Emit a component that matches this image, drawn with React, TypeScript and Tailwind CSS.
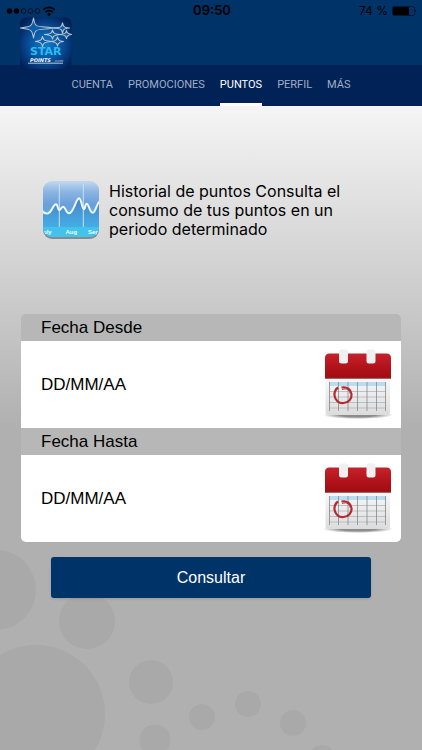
import { useState } from 'react';

const tabs = ['CUENTA', 'PROMOCIONES', 'PUNTOS', 'PERFIL', 'MÁS'];

function StatusBar() {
  return (
    <div className="relative z-10 flex h-[22px] items-center pr-[5px] pl-[7px] font-['Inter',sans-serif] text-xs text-black">
      <div className="flex flex-1 items-center">
        <svg width="48" height="12" viewBox="0 0 48 12" overflow="visible" aria-hidden="true">
          <circle cx="2.500" cy="6" r="2.700" />
          <circle cx="9.500" cy="6" r="2.700" />
          <g fill="none" stroke="#000" strokeWidth="0.700">
            <circle cx="16.500" cy="6" r="2.400" />
            <circle cx="23.500" cy="6" r="2.400" />
            <circle cx="30.500" cy="6" r="2.400" />
          </g>
          <g fill="none" stroke="#000" strokeWidth="1.700">
            <path d="M36.300 4.700a8.200 8.200 0 0 1 11.400 0" />
            <path d="M38.300 7.200a5.200 5.200 0 0 1 7.400 0" />
          </g>
          <path d="M42 11.200l-2-2.200a2.900 2.900 0 0 1 4 0z" />
        </svg>
      </div>
      <span className="text-[13px] font-semibold">09:50</span>
      <div className="flex flex-1 items-center justify-end gap-1">
        <span>74 %</span>
        <svg width="25" height="10" viewBox="0 0 25 10" aria-hidden="true">
          <rect x="0.500" y="0.500" width="22" height="9" rx="1.500" fill="none" stroke="#000" strokeOpacity="0.700" strokeWidth="0.700" />
          <rect x="1" y="1" width="16" height="8" rx="0.800" />
          <path d="M23.400 3.200q1.500 1.800 0 3.600z" />
        </svg>
      </div>
    </div>
  );
}

interface StarProps {
  x: number;
  y: number;
  left: number;
  right: number;
  tall: number;
  waist: number;
}

// four-pointed star with arms that curve in to the waist
function Star({ x, y, left, right, tall, waist }: StarProps) {
  const w = waist;
  return (
    <path
      d={`M${x} ${y - tall}Q${x + w / 2} ${y - w} ${x + w} ${y - w}Q${x + w} ${y - w / 2} ${x + right} ${y}Q${x + w} ${y + w / 2} ${x + w} ${y + w}Q${x + w / 2} ${y + w} ${x} ${y + tall}Q${x - w / 2} ${y + w} ${x - w} ${y + w}Q${x - w} ${y + w / 2} ${x - left} ${y}Q${x - w} ${y - w / 2} ${x - w} ${y - w}Q${x - w / 2} ${y - w} ${x} ${y - tall}z`}
    />
  );
}

function Logo() {
  return (
    <svg
      className="absolute top-[17px] left-5"
      width="52"
      height="52"
      viewBox="0 0 52 52"
      overflow="visible"
      role="img"
      aria-label="Star Points"
    >
      <defs>
        <radialGradient id="logoBg" cx="50%" cy="52%" r="62%">
          <stop offset="0" stopColor="#0d7cc8" />
          <stop offset="0.450" stopColor="#0a57a4" />
          <stop offset="1" stopColor="#021f57" />
        </radialGradient>
      </defs>
      <rect y="0.500" width="51.500" height="51.500" rx="6" fill="url(#logoBg)" />
      <g fill="#0d5ca8" stroke="#b9c5cf" strokeWidth="1.100" strokeLinejoin="round">
        <Star x={13.5} y={11} left={13} right={24} tall={10} waist={2.8} />
        <Star x={42.5} y={11} left={8} right={7} tall={5} waist={1.6} />
        <Star x={32.5} y={17.5} left={8} right={8} tall={4.5} waist={1.6} />
        <Star x={46.5} y={17.5} left={6} right={5} tall={4} waist={1.4} />
        <Star x={22.5} y={24.5} left={7} right={9} tall={5} waist={1.7} />
        <Star x={37.5} y={24.5} left={7} right={6} tall={4.5} waist={1.6} />
      </g>
      <text x="10" y="37.500" fontFamily="DejaVu Sans, sans-serif" fontWeight="700" fontSize="11" fill="#2bbcf3">STAR</text>
      <text x="10" y="45" fontFamily="DejaVu Sans, sans-serif" fontWeight="700" fontStyle="italic" fontSize="5" fill="#f4f8fb">POINTS</text>
      <text x="34" y="45" fontFamily="Liberation Sans, sans-serif" fontWeight="700" fontStyle="italic" fontSize="4" fill="#8fa9c4">.com</text>
      <path d="M8 46.200h35" stroke="#b7c8d9" strokeWidth="1" />
    </svg>
  );
}

function ChartIcon() {
  const wave =
    'M1 31C3 33 5 34 7.300 33.300 11 32 12 24.500 15 24.300 17 24.500 16.500 30 18.300 30 20 30 20.500 26.500 22.300 26.700 24.500 27 25 33.500 28.300 33.300 32.500 33 35 18.500 38 18.300 40.500 18.500 41 29 43 29.300 44.500 29.300 44 23.700 45.700 23.700 48 24 48.500 32.700 51.700 32.700 55 32.500 55 24 59 21';
  return (
    <svg className="shrink-0" width="60" height="60" viewBox="0 0 60 60" aria-hidden="true">
      <defs>
        <linearGradient id="chartBg" x1="0" y1="0" x2="0" y2="1">
          <stop offset="0" stopColor="#c3d8f0" />
          <stop offset="0.200" stopColor="#8ab4e2" />
          <stop offset="0.420" stopColor="#6a9fda" />
          <stop offset="0.700" stopColor="#55b4e8" />
          <stop offset="1" stopColor="#2fb9e9" />
        </linearGradient>
        <linearGradient id="chartArea" x1="0" y1="0" x2="0" y2="1">
          <stop offset="0" stopColor="#3a77c5" />
          <stop offset="1" stopColor="#43bdec" />
        </linearGradient>
        <clipPath id="chartClip">
          <rect x="2" y="1" width="56" height="56" rx="9" />
        </clipPath>
      </defs>
      <rect x="2" y="3" width="56" height="56" rx="9" fill="#858b91" />
      <g clipPath="url(#chartClip)">
        <rect x="1" y="1" width="58" height="56" fill="url(#chartBg)" />
        <path d={`${wave}V58H1z`} fill="url(#chartArea)" opacity="0.700" />
        <path d="M18.300 4v43M42.300 4v43" stroke="#c5e1f5" strokeWidth="1" />
        <path d={wave} fill="none" stroke="#eef9ff" strokeWidth="2" strokeLinejoin="round" />
        <rect x="1" y="47" width="58" height="11" fill="#43c2ec" />
        <g fill="#f2fbff" fontFamily="Liberation Sans, sans-serif" fontWeight="700" fontSize="6">
          <text x="2" y="54">uly</text>
          <text x="24.500" y="54">Aug</text>
          <text x="47" y="54">Sep</text>
        </g>
      </g>
    </svg>
  );
}

function CalendarIcon() {
  return (
    <svg width="70" height="72" viewBox="0 0 70 72" aria-hidden="true">
      <defs>
        <linearGradient id="calRed" x1="0" y1="0" x2="0" y2="1">
          <stop offset="0" stopColor="#c5232b" />
          <stop offset="0.500" stopColor="#b4141b" />
          <stop offset="1" stopColor="#9f0c12" />
        </linearGradient>
        <linearGradient id="calPaper" x1="0" y1="0" x2="0" y2="1">
          <stop offset="0" stopColor="#f8f8f8" />
          <stop offset="1" stopColor="#dcdcdc" />
        </linearGradient>
        <radialGradient id="calShadow">
          <stop offset="0.500" stopColor="#8c8c8c" />
          <stop offset="1" stopColor="#8c8c8c" stopOpacity="0" />
        </radialGradient>
      </defs>
      <ellipse cx="35" cy="66" rx="35" ry="4" fill="url(#calShadow)" />
      <path d="M2.500 29h64.500v34q0 3-3 3H5.500q-3 0-3-3z" fill="url(#calPaper)" />
      <rect x="6" y="33" width="57" height="4" fill="#b9dcf0" />
      <path d="M6 42.500h57M6 48h57M6 53.500h57M6 59h57" stroke="#b1b5b9" strokeWidth="0.800" />
      <path
        d="M6.500 33v29M15.500 33v29M25 33v29M34.500 33v29M44 33v29M53.500 33v29M62.500 33v29"
        stroke="#85898d"
        strokeWidth="0.800"
      />
      <path d="M2 29V9q0-4.500 4.500-4.500h57q4.500 0 4.500 4.500v20z" fill="url(#calRed)" />
      <path d="M2 29.300h66" stroke="#8f3b3f" strokeWidth="1" />
      <rect x="16" y="0.500" width="9" height="14" rx="2.500" fill="#f0f0f0" />
      <rect x="43.500" y="0.500" width="9" height="14" rx="2.500" fill="#f0f0f0" />
      <path
        d="M15 38.500q-4 3-3.500 8c.6 5 4.500 8 9 7.500 5-.5 8.500-4 8-9-.5-4.500-4.500-7.700-10-6.500"
        fill="none"
        stroke="#b52a31"
        strokeWidth="2.200"
      />
      <path d="M19 40.500c5-2 8 1 8 4" fill="none" stroke="#b52a31" strokeWidth="1" />
    </svg>
  );
}

interface DateFieldProps {
  id: string;
  label: string;
}

function DateField({ id, label }: DateFieldProps) {
  const [value, setValue] = useState('');

  return (
    <div>
      <label htmlFor={id} className="block h-[27px] bg-[#b7b7b7] px-5 text-[17px] leading-[28px]">
        {label}
      </label>
      <div className="flex h-[87px] items-center bg-white pr-2 pl-5">
        <input
          id={id}
          type="text"
          value={value}
          onChange={(e) => setValue(e.target.value)}
          placeholder="DD/MM/AA"
          className="h-full min-w-0 flex-1 bg-transparent text-[17px] text-black outline-none placeholder:text-black"
        />
        <button type="button" aria-label={`Elegir ${label}`} className="shrink-0">
          <CalendarIcon />
        </button>
      </div>
    </div>
  );
}

function Bubbles() {
  return (
    <svg className="absolute bottom-0 left-0" width="340" height="210" viewBox="0 540 340 210" fill="#a9a9a9" aria-hidden="true">
      <circle cx="-4" cy="590" r="40" />
      <circle cx="87" cy="621" r="28" />
      <circle cx="36" cy="714" r="69" />
      <circle cx="151" cy="682" r="22" />
      <circle cx="155" cy="740" r="15.500" />
      <circle cx="202" cy="717" r="13" />
      <circle cx="248" cy="704" r="13" />
      <circle cx="293" cy="723" r="13" />
      <circle cx="322" cy="758" r="13" />
    </svg>
  );
}

export default function App() {
  const [active, setActive] = useState('PUNTOS');

  return (
    <div className="flex min-h-screen flex-col font-['Liberation_Sans',sans-serif] text-black">
      <header className="relative bg-[#003368]">
        <StatusBar />
        <div className="h-[43px]" />
        <Logo />
        <nav className="flex h-[41px] justify-center gap-[15px] bg-[#002257] font-['Roboto',sans-serif] text-[11px]">
          {tabs.map((tab) => (
            <button
              key={tab}
              type="button"
              onClick={() => setActive(tab)}
              className={`border-b-[3px] pt-[2px] ${
                active === tab ? 'border-white text-white' : 'border-transparent text-[#a3adc4]'
              }`}
            >
              {tab}
            </button>
          ))}
        </nav>
      </header>

      <main className="relative flex-1 bg-linear-to-b from-[#f5f5f5] to-[#b0b0b0] to-50% px-[21px] pb-10">
        <Bubbles />
        <div className="relative">
          <section className="flex items-center gap-2 pt-[74px] pl-5">
            <ChartIcon />
            <p className="max-w-[240px] font-['Inter',sans-serif] text-base leading-[19px]">
              Historial de puntos Consulta el consumo de tus puntos en un periodo determinado
            </p>
          </section>

          <form onSubmit={(e) => e.preventDefault()}>
            <div className="mt-[74px] overflow-hidden rounded-[5px]">
              <DateField id="desde" label="Fecha Desde" />
              <DateField id="hasta" label="Fecha Hasta" />
            </div>
            <div className="px-[30px] pt-[15px]">
              <button type="submit" className="h-[41px] w-full rounded-[3px] bg-[#003368] text-base text-white shadow">
                Consultar
              </button>
            </div>
          </form>
        </div>
      </main>
    </div>
  );
}
